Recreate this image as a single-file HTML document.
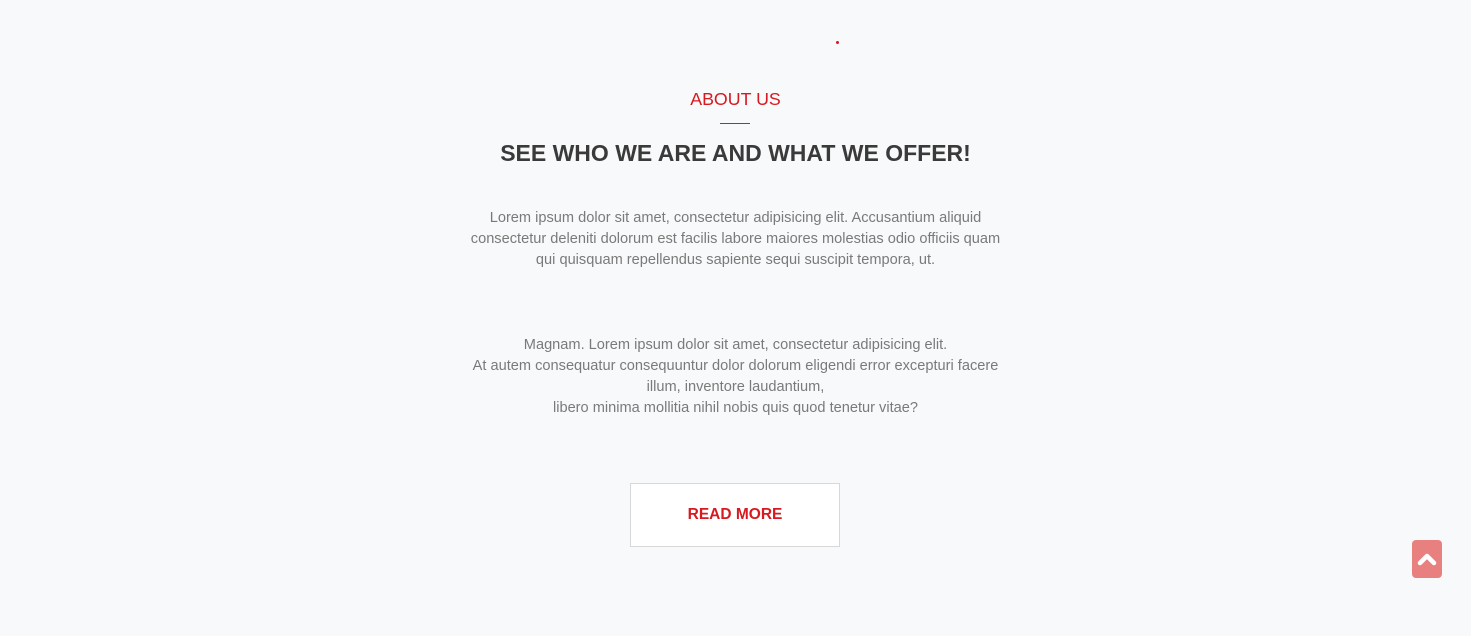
<!DOCTYPE html>
<html><head><meta charset="utf-8"><style>
body{margin:0;background:#f8f9fa;width:1471px;height:636px;overflow:hidden;position:relative;font-family:"Liberation Sans",sans-serif}
.t{position:absolute;left:0;width:1471px;text-align:center}
.para{position:absolute;left:0;width:1471px;text-align:center;color:#7a7a7a;font-size:14.6px;line-height:21px;white-space:nowrap}
</style></head><body>
<div style="position:absolute;left:836px;top:41px;width:3px;height:3px;border-radius:50%;background:#d71920"></div>
<div class="t" style="top:89px;color:#d71920;font-size:17.8px;">ABOUT US</div>
<div style="position:absolute;left:720px;top:123px;width:30px;height:1px;background:#d71920"></div>
<div class="t" style="top:140px;color:#3a3a3a;font-size:23px;font-weight:bold;">SEE WHO WE ARE AND WHAT WE OFFER!</div>
<div class="para" style="top:208px">Lorem ipsum dolor sit amet, consectetur adipisicing elit. Accusantium aliquid<br>consectetur deleniti dolorum est facilis labore maiores molestias odio officiis quam<br>qui quisquam repellendus sapiente sequi suscipit tempora, ut.</div>
<div class="para" style="top:335px">Magnam. Lorem ipsum dolor sit amet, consectetur adipisicing elit.<br>At autem consequatur consequuntur dolor dolorum eligendi error excepturi facere<br>illum, inventore laudantium,<br>libero minima mollitia nihil nobis quis quod tenetur vitae?</div>
<div style="position:absolute;left:630px;top:483px;width:208px;height:62px;border:1px solid #d8d8d8;background:#fff;color:#d71920;font-weight:bold;font-size:15.5px;line-height:62px;text-align:center">READ MORE</div>
<div style="position:absolute;left:1412px;top:540px;width:30px;height:38px;border-radius:4px;background:#e88080">
<svg width="30" height="38" viewBox="0 0 30 38"><path d="M8 23 L15 16 L22 23" stroke="#fff" stroke-width="4.5" fill="none" stroke-linecap="round" stroke-linejoin="round"/></svg></div>
</body></html>
